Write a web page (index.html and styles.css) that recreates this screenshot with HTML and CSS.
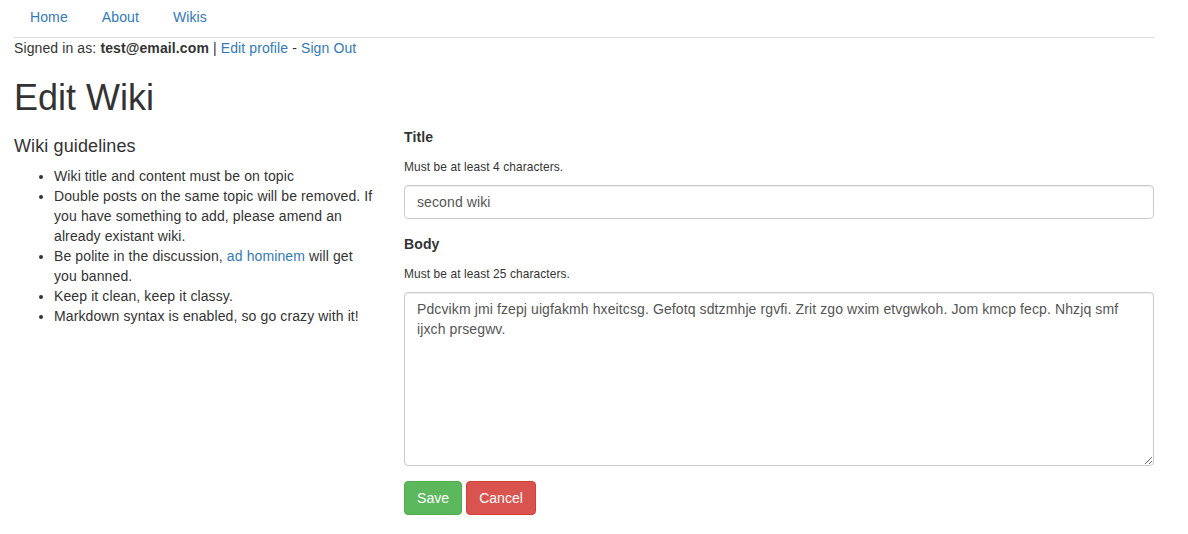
FILE: index.html
```html
<!DOCTYPE html>
<html>
<head>
<meta charset="utf-8">
<title>Edit Wiki</title>
<link rel="stylesheet" href="styles.css">
</head>
<body>
<div class="container">
  <ul class="nav">
    <li><a href="#">Home</a></li>
    <li><a href="#">About</a></li>
    <li><a href="#">Wikis</a></li>
  </ul>
  <div class="signed">Signed in as: <strong>test@email.com</strong> | <a href="#">Edit profile</a> - <a href="#">Sign Out</a></div>
  <h1 class="page-title">Edit Wiki</h1>
  <div class="row">
    <div class="col-side">
      <h4 class="side-title">Wiki guidelines</h4>
      <ul class="guidelines">
        <li>Wiki title and content must be on topic</li>
        <li>Double posts on the same topic will be removed. If you have something to add, please amend an already existant wiki.</li>
        <li>Be polite in the discussion, <a href="#">ad hominem</a> will get you banned.</li>
        <li>Keep it clean, keep it classy.</li>
        <li>Markdown syntax is enabled, so go crazy with it!</li>
      </ul>
    </div>
    <form class="col-main">
      <div class="form-group">
        <label class="label">Title</label>
        <small class="help">Must be at least 4 characters.</small>
        <input class="form-control" type="text" value="second wiki">
      </div>
      <div class="form-group">
        <label class="label">Body</label>
        <small class="help">Must be at least 25 characters.</small>
        <textarea class="form-control textarea" rows="8">Pdcvikm jmi fzepj uigfakmh hxeitcsg. Gefotq sdtzmhje rgvfi. Zrit zgo wxim etvgwkoh. Jom kmcp fecp. Nhzjq smf ijxch prsegwv.</textarea>
      </div>
      <div class="actions">
        <button type="button" class="btn btn-success">Save</button>
        <button type="button" class="btn btn-danger">Cancel</button>
      </div>
    </form>
  </div>
</div>
</body>
</html>
```
FILE: styles.css
```css
* { box-sizing: border-box; }
html, body { margin: 0; padding: 0; background: #fff; }
body {
  font-family: "Liberation Sans", Arial, Helvetica, sans-serif;
  font-size: 14px;
  line-height: 20px;
  letter-spacing: 0.11px;
  color: #333;
}
a { color: #337ab7; text-decoration: none; }
.container { width: 1140px; margin-left: 14px; }

.nav {
  display: flex;
  list-style: none;
  margin: 0;
  padding: 0;
  border-bottom: 1px solid #ddd;
}
.nav li + li { margin-left: 3px; }
.nav a { display: block; padding: 7px 15px 10px 16px; line-height: 20px; }

.signed { line-height: 20px; }

.page-title {
  font-size: 36px;
  font-weight: 500;
  line-height: 1.1;
  letter-spacing: 0;
  margin: 20px 0 9px;
}

.row {
  display: grid;
  grid-template-columns: 360px 1fr;
  column-gap: 30px;
  align-items: start;
}

.side-title {
  font-size: 18px;
  font-weight: 500;
  line-height: 1.1;
  margin: 10px 0 10px;
}
.guidelines { margin: 0; padding-left: 40px; }

.col-main { margin: 0; }
.form-group { margin-bottom: 15px; display: flex; flex-direction: column; align-items: flex-start; }
.label { font-weight: bold; margin-bottom: 5px; line-height: 20px; }
.help { display: block; font-size: 11.9px; line-height: 20px; margin-top: 5px; margin-bottom: 8px; }
.form-control {
  display: block;
  width: 100%;
  height: 34px;
  padding: 6px 12px;
  font-family: inherit;
  font-size: 14px;
  line-height: 20px;
  letter-spacing: 0.11px;
  color: #555;
  background: #fff;
  border: 1px solid #ccc;
  border-radius: 4px;
  box-shadow: inset 0 1px 1px rgba(0,0,0,.075);
  margin: 0;
}
.textarea { height: 174px; resize: vertical; }

.actions { display: flex; gap: 4px; }
.btn {
  font-family: inherit;
  font-size: 14px;
  line-height: 20px;
  letter-spacing: 0.05px;
  padding: 6px 12px;
  border: 1px solid transparent;
  border-radius: 4px;
  color: #fff;
  cursor: pointer;
}
.btn-success { background: #5cb85c; border-color: #4cae4c; }
.btn-danger { background: #d9534f; border-color: #d43f3a; }
```
